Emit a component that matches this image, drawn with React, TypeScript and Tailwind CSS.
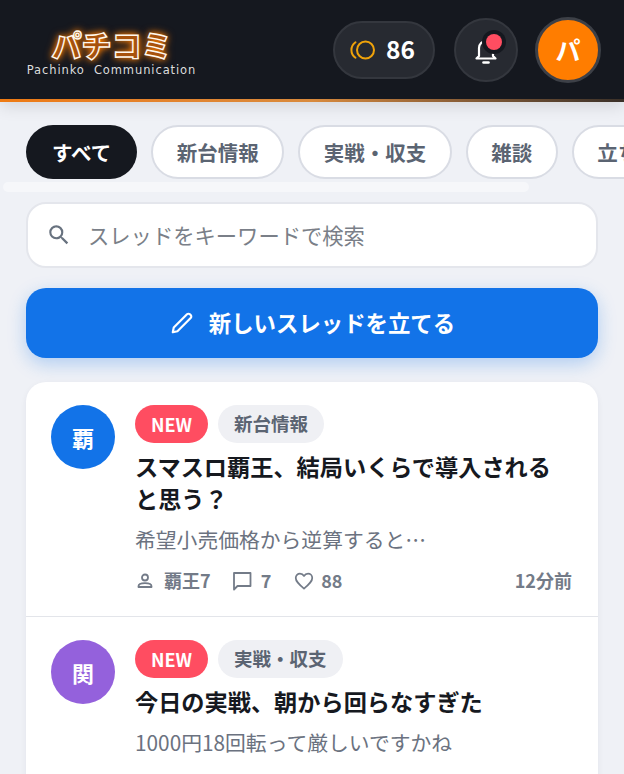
const tabs = ['新台情報', '実戦・収支', '雑談', '立ち回り'];

type Thread = {
  initial: string;
  color: string;
  tag: string;
  title: string;
  excerpt: string;
  author: string;
  comments: number;
  likes: number;
  time: string;
};

const threads: Thread[] = [
  {
    initial: '覇',
    color: 'bg-[#1273e8]',
    tag: '新台情報',
    title: 'スマスロ覇王、結局いくらで導入されると思う？',
    excerpt: '希望小売価格から逆算すると…',
    author: '覇王7',
    comments: 7,
    likes: 88,
    time: '12分前',
  },
  {
    initial: '関',
    color: 'bg-[#9461dc]',
    tag: '実戦・収支',
    title: '今日の実戦、朝から回らなすぎた',
    excerpt: '1000円18回転って厳しいですかね',
    author: '関西スロッター',
    comments: 12,
    likes: 34,
    time: '25分前',
  },
];

function BellIcon() {
  return (
    <svg width="28" height="30" viewBox="0 0 28 30" fill="none" stroke="currentColor" strokeWidth="2.2" strokeLinecap="round" strokeLinejoin="round">
      <path d="M7 21V13a7 7 0 0 1 14 0v8l2.500 2.500h-19z" />
      <path d="M11.500 27.500h5" strokeWidth="2.600" />
    </svg>
  );
}

function SearchIcon() {
  return (
    <svg width="26" height="26" viewBox="0 0 24 24" fill="#68727f">
      <path d="M15.500 14h-.79l-.28-.27A6.470 6.470 0 0 0 16 9.500 6.500 6.500 0 1 0 9.500 16c1.610 0 3.090-.59 4.230-1.570l.27.28v.79l5 4.990L20.490 19zm-6 0C7.010 14 5 11.990 5 9.500S7.010 5 9.500 5 14 7.010 14 9.500 11.990 14 9.500 14" />
    </svg>
  );
}

function PencilIcon() {
  return (
    <svg width="26" height="26" viewBox="0 0 24 24" fill="none" stroke="currentColor" strokeWidth="2" strokeLinejoin="round">
      <path d="M3.500 20.500l.9-4.300L16.600 4a1.900 1.900 0 0 1 2.700 0l.7.7a1.900 1.900 0 0 1 0 2.700L7.800 19.600z" />
    </svg>
  );
}

function PersonIcon() {
  return (
    <svg width="20" height="20" viewBox="0 0 20 20" fill="none" stroke="currentColor" strokeWidth="1.8" strokeLinecap="round" strokeLinejoin="round">
      <circle cx="10" cy="6.500" r="3" />
      <path d="M3.500 15.200c0-1.900 3-3 6.500-3s6.500 1.100 6.500 3v.8h-13z" />
    </svg>
  );
}

function ChatIcon() {
  return (
    <svg width="22" height="22" viewBox="0 0 22 22" fill="none" stroke="currentColor" strokeWidth="1.8" strokeLinejoin="round">
      <path d="M3 3h16.500v13H6.500L3 19.500z" />
    </svg>
  );
}

function HeartIcon() {
  return (
    <svg width="22" height="22" viewBox="0 0 24 24" fill="none" stroke="currentColor" strokeWidth="1.9" strokeLinejoin="round">
      <path d="M12 20.300C6 15 3 12.200 3 8.600 3 5.900 5.100 4 7.600 4c1.700 0 3.400.9 4.400 2.500C13 4.900 14.700 4 16.400 4 18.900 4 21 5.900 21 8.600c0 3.600-3 6.400-9 11.700z" />
    </svg>
  );
}

function ThreadRow({ thread }: { thread: Thread }) {
  return (
    <div className="flex gap-5 border-b border-[#e3e5ea] pl-[25px] pr-[26px] pt-[23px] pb-[22px]">
      <div className={`flex h-16 w-16 shrink-0 items-center justify-center rounded-full text-[22px] font-bold text-white ${thread.color}`}>
        {thread.initial}
      </div>
      <div className="min-w-0 flex-1">
        <div className="flex items-center gap-[10px]">
          <span className="flex h-[38px] w-[73px] items-center justify-center rounded-full bg-[#ff4d61] text-[18px] font-bold text-white">NEW</span>
          <span className="flex h-[38px] items-center rounded-full bg-[#eff0f4] px-4 text-[18.500px] font-bold text-[#5b6472]">{thread.tag}</span>
        </div>
        <h2 className="mt-[7px] text-[23.200px] font-bold leading-[32px] text-[#16191f]">{thread.title}</h2>
        <p className="mt-[9px] text-[20.800px] leading-[32px] text-[#6b7280]">{thread.excerpt}</p>
        <div className="mt-[12px] flex items-center text-[18px] font-bold text-[#737b88]">
          <PersonIcon />
          <span className="ml-[9px]">{thread.author}</span>
          <span className="ml-[20px]"><ChatIcon /></span>
          <span className="ml-[8px]">{thread.comments}</span>
          <span className="ml-[22px]"><HeartIcon /></span>
          <span className="ml-[6px]">{thread.likes}</span>
          <span className="ml-auto">{thread.time}</span>
        </div>
      </div>
    </div>
  );
}

export default function App() {
  return (
    <div className="h-[774px] w-[624px] overflow-hidden bg-[#eff1f6] font-['Noto_Sans_CJK_JP','Noto_Sans',sans-serif]">
      {/* Header */}
      <header className="relative z-10 shadow-[0_4px_16px_rgba(0,0,0,0.12)]">
        <div className="flex h-[99px] items-center justify-between bg-[#15181f] pl-[25px] pr-[23px]">
          {/* Logo */}
          <div className="flex w-[173px] flex-col items-center pt-[5px]">
            <span className="text-[30px] font-black leading-[34px] text-[#a8520c] [-webkit-text-stroke:1.400px_#fff8ee] [text-shadow:0_0_6px_#ff7d00,0_0_10px_#ff7d00]">パチコミ</span>
            <span className="mt-[2px] whitespace-nowrap font-['DejaVu_Sans',sans-serif] text-[11.500px] leading-[14px] tracking-[0.900px] text-[#dcdcdc]">Pachinko&nbsp; Communication</span>
          </div>

          <div className="flex items-center">
            {/* Coins */}
            <div className="flex h-[58px] w-[102px] items-center justify-center gap-[10px] rounded-full border-2 border-[#34373e] bg-[#272a31] pr-[4px]">
              <svg width="27" height="20" viewBox="0 0 27 20" fill="none" stroke="#f0a30a" strokeWidth="2">
                <circle cx="16.500" cy="10" r="8.500" />
                <path d="M6.500 2.200a9.500 9.500 0 0 0 0 15.600" strokeLinecap="round" />
              </svg>
              <span className="text-[24.500px] font-bold text-white">86</span>
            </div>

            {/* Notifications */}
            <div className="relative ml-[19px] flex h-16 w-16 items-center justify-center rounded-full border-2 border-[#34373e] bg-[#272a31] text-white">
              <BellIcon />
              <span className="absolute right-[14px] top-[14px] h-4 w-4 rounded-full bg-[#ff4d61] shadow-[0_0_0_4px_#15181f]" />
            </div>

            {/* Avatar */}
            <div className="ml-[17px] flex h-[66px] w-[66px] items-center justify-center rounded-full border-[3px] border-[#3d4047] bg-[#ff7d00] text-[25px] font-bold text-white">
              パ
            </div>
          </div>
        </div>
        <div className="h-[3px] bg-gradient-to-r from-[#ee7a12] via-[#d98a3c] to-[#3a3028]" />
      </header>

      {/* Category tabs */}
      <div className="relative h-[100px] overflow-hidden pt-[23px]">
        <div className="flex gap-[14px] pl-[26px]">
          <span className="flex h-[54px] shrink-0 items-center rounded-full bg-[#15181f] px-[26px] text-[20.500px] font-bold text-white">すべて</span>
          {tabs.map((tab) => (
            <span key={tab} className="flex h-[54px] shrink-0 items-center rounded-full border-2 border-[#d9dce4] bg-white px-[23.500px] text-[20.500px] font-bold text-[#5b6472]">
              {tab}
            </span>
          ))}
        </div>
        <div className="absolute left-[3px] top-[80px] h-[10px] w-[526px] rounded-full bg-[#f6f7fa]" />
      </div>

      <main className="px-[26px]">
        {/* Search */}
        <div className="flex h-[66px] items-center rounded-[20px] border-2 border-[#e4e6ec] bg-white pl-[18px]">
          <SearchIcon />
          <span className="ml-[16px] text-[21.300px] text-[#7a7f88]">スレッドをキーワードで検索</span>
        </div>

        {/* New thread */}
        <button className="mt-5 flex h-[70px] w-full items-center justify-center gap-[14px] rounded-[20px] bg-[#1273e8] text-[22.400px] font-bold text-white shadow-[0_6px_18px_rgba(18,115,232,0.28)]">
          <PencilIcon />
          新しいスレッドを立てる
        </button>

        {/* Threads */}
        <div className="mt-6 overflow-hidden rounded-[20px] bg-white shadow-[0_2px_6px_rgba(20,30,60,0.06)]">
          {threads.map((thread) => (
            <ThreadRow key={thread.initial} thread={thread} />
          ))}
        </div>
      </main>
    </div>
  );
}
